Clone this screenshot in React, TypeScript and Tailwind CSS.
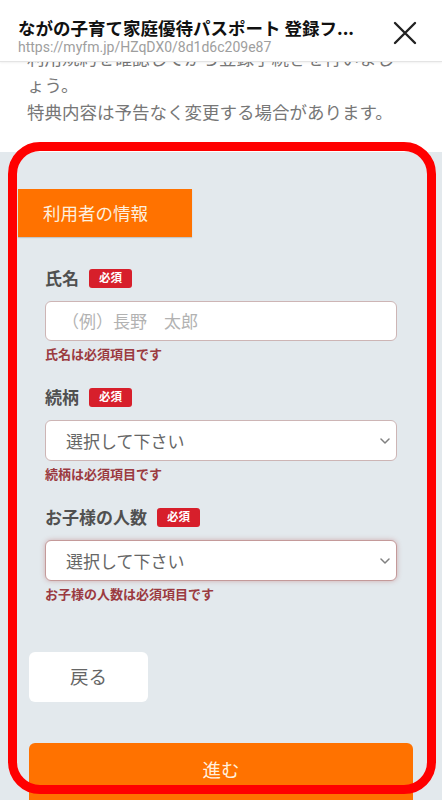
import React from 'react';

const font = { fontFamily: '"Noto Sans CJK JP", "Noto Sans", sans-serif' };

const Badge: React.FC = () => (
  <span className="ml-[10px] inline-flex h-[19px] w-[43px] items-center justify-center rounded-[3px] bg-[#d71f2b] text-[11.5px] font-bold leading-none text-white">
    必須
  </span>
);

const Chevron: React.FC = () => (
  <svg width="10" height="6" viewBox="0 0 10 6" className="shrink-0">
    <path d="M1 1l4 4 4-4" fill="none" stroke="#808080" strokeWidth="1.5" strokeLinecap="round" strokeLinejoin="round" />
  </svg>
);

type FieldProps = {
  label: string;
  error: string;
  children: React.ReactNode;
};

const Field: React.FC<FieldProps> = ({ label, error, children }) => (
  <div className="flex flex-col">
    <div className="mb-[13px] flex h-5 items-center">
      <span className="text-[17px] font-bold leading-5 text-[#505050]">{label}</span>
      <Badge />
    </div>
    {children}
    <p className="mt-[5px] h-4 text-[13px] font-bold leading-4 text-[#9b3a40]">{error}</p>
  </div>
);

const SelectBox: React.FC<{ focused?: boolean }> = ({ focused }) => (
  <div
    className={`flex h-[41px] items-center justify-between rounded-[6px] border bg-white pl-5 pr-[6px] ${
      focused
        ? 'border-[#c49a9a] shadow-[0_0_5px_rgba(170,60,60,0.35)]'
        : 'border-[#cdb5b5]'
    }`}
  >
    <span className="text-[17px] text-[#666]">選択して下さい</span>
    <Chevron />
  </div>
);

export default function App() {
  return (
    <div className="relative h-[800px] w-[442px] overflow-hidden bg-[#e3e9ed]" style={font}>
      {/* browser sheet header */}
      <header className="relative z-10 flex h-[62px] items-start justify-between border-b border-[#e4e4e4] bg-white pl-[18px] pr-[25px] shadow-[0_1px_2px_rgba(0,0,0,0.06)]">
        <div className="pt-[17px]">
          <h1 className="text-[17.5px] font-bold leading-[22px] text-[#111]">
            ながの子育て家庭優待パスポート 登録フ...
          </h1>
          <p className="text-[14px] leading-4 text-[#9e9e9e]" style={{ fontFamily: 'Roboto, "Noto Sans", sans-serif' }}>
            https://myfm.jp/HZqDX0/8d1d6c209e87
          </p>
        </div>
        <svg width="24" height="24" viewBox="0 0 24 24" className="mt-[21px]">
          <path d="M2 2l20 20M22 2L2 22" stroke="#222" strokeWidth="2.4" strokeLinecap="round" />
        </svg>
      </header>

      {/* notes */}
      <div className="h-[90px] overflow-hidden bg-white px-[27px]">
        <div className="-mt-[18px] text-[17.5px] leading-[27px] text-[#777]">
          <p>利用規約を確認してから登録手続きを行いまし</p>
          <p>ょう。</p>
          <p>特典内容は予告なく変更する場合があります。</p>
        </div>
      </div>

      {/* form */}
      <section className="pt-[37px]">
        <div className="ml-[18px] flex h-12 w-[174px] items-center bg-[#ff7200] pl-[25px] text-[17.5px] text-[#fdefdf] shadow-[0_1px_1px_rgba(0,0,0,0.15)]">
          利用者の情報
        </div>

        <div className="mt-[31px] flex flex-col gap-[25px] px-[45px]">
          <Field label="氏名" error="氏名は必須項目です">
            <div className="flex h-10 items-center rounded-[6px] border border-[#cdb5b5] bg-white pl-4">
              <span className="text-[17px] text-[#b2b2b2]">（例）長野　太郎</span>
            </div>
          </Field>
          <Field label="続柄" error="続柄は必須項目です">
            <SelectBox />
          </Field>
          <Field label="お子様の人数" error="お子様の人数は必須項目です">
            <SelectBox focused />
          </Field>
        </div>

        <div className="mt-[50px] px-[29px]">
          <button
            type="button"
            className="flex h-[50px] w-[119px] items-center justify-center rounded-[6px] bg-white text-[18.5px] text-[#666]"
          >
            戻る
          </button>
          <button
            type="button"
            className="mt-[41px] flex h-[60px] w-full items-start justify-center rounded-t-[6px] bg-[#ff7200] pt-[13px] text-[18.5px] text-[#fff0dd]"
          >
            進む
          </button>
        </div>
      </section>

      {/* red annotation frame */}
      <div className="pointer-events-none absolute left-[8px] top-[142px] h-[652px] w-[428px] rounded-[32px] border-[9px] border-[#ff0000]" />
    </div>
  );
}
